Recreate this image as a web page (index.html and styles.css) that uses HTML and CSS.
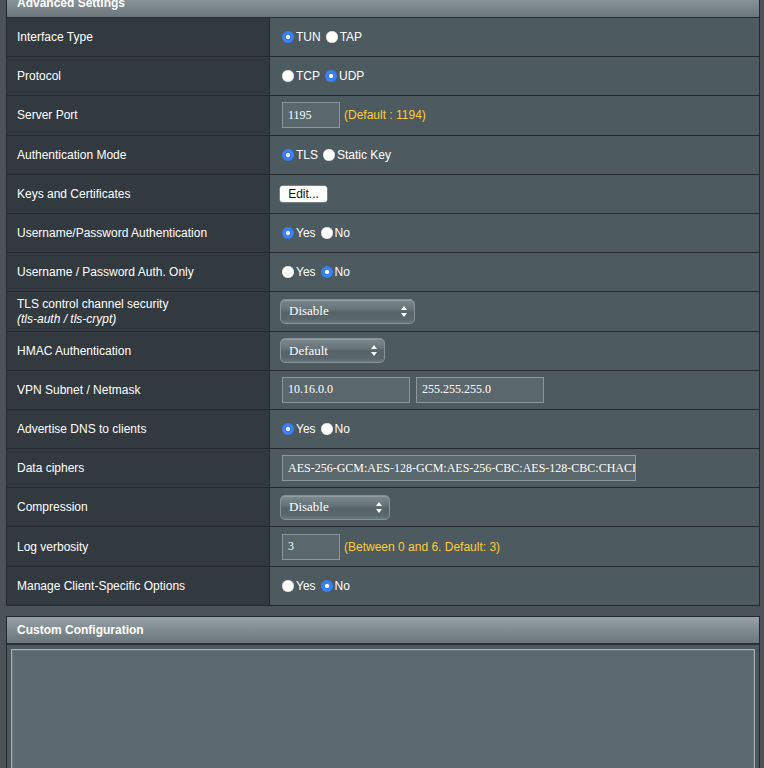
FILE: index.html
```html
<!DOCTYPE html>
<html>
<head>
<meta charset="utf-8">
<link rel="stylesheet" href="styles.css">
</head>
<body>
<div class="block">
  <div class="head first">Advanced Settings</div>
  <div class="row">
    <div class="label">Interface Type</div>
    <div class="value">
      <label class="opt"><input type="radio" name="if" checked>TUN</label>
      <label class="opt"><input type="radio" name="if">TAP</label>
    </div>
  </div>
  <div class="row">
    <div class="label">Protocol</div>
    <div class="value">
      <label class="opt"><input type="radio" name="pr">TCP</label>
      <label class="opt"><input type="radio" name="pr" checked>UDP</label>
    </div>
  </div>
  <div class="row">
    <div class="label">Server Port</div>
    <div class="value">
      <input class="field small" type="text" value="1195">
      <span class="hint">(Default : 1194)</span>
    </div>
  </div>
  <div class="row">
    <div class="label">Authentication Mode</div>
    <div class="value">
      <label class="opt"><input type="radio" name="am" checked>TLS</label>
      <label class="opt"><input type="radio" name="am">Static Key</label>
    </div>
  </div>
  <div class="row">
    <div class="label">Keys and Certificates</div>
    <div class="value">
      <button class="btn" type="button">Edit...</button>
    </div>
  </div>
  <div class="row">
    <div class="label">Username/Password Authentication</div>
    <div class="value">
      <label class="opt"><input type="radio" name="up" checked>Yes</label>
      <label class="opt"><input type="radio" name="up">No</label>
    </div>
  </div>
  <div class="row">
    <div class="label">Username / Password Auth. Only</div>
    <div class="value">
      <label class="opt"><input type="radio" name="uo">Yes</label>
      <label class="opt"><input type="radio" name="uo" checked>No</label>
    </div>
  </div>
  <div class="row">
    <div class="label two">TLS control channel security<br><i>(tls-auth / tls-crypt)</i></div>
    <div class="value">
      <div class="select w134"><span>Disable</span><svg width="6" height="11" viewBox="0 0 6 11"><path d="M3 0 L6 4 L0 4 Z M3 11 L6 7 L0 7 Z" fill="#fff"/></svg></div>
    </div>
  </div>
  <div class="row">
    <div class="label">HMAC Authentication</div>
    <div class="value">
      <div class="select w104"><span>Default</span><svg width="6" height="11" viewBox="0 0 6 11"><path d="M3 0 L6 4 L0 4 Z M3 11 L6 7 L0 7 Z" fill="#fff"/></svg></div>
    </div>
  </div>
  <div class="row">
    <div class="label">VPN Subnet / Netmask</div>
    <div class="value gap6">
      <input class="field mid" type="text" value="10.16.0.0">
      <input class="field mid" type="text" value="255.255.255.0">
    </div>
  </div>
  <div class="row">
    <div class="label">Advertise DNS to clients</div>
    <div class="value">
      <label class="opt"><input type="radio" name="dns" checked>Yes</label>
      <label class="opt"><input type="radio" name="dns">No</label>
    </div>
  </div>
  <div class="row">
    <div class="label">Data ciphers</div>
    <div class="value">
      <input class="field wide" type="text" value="AES-256-GCM:AES-128-GCM:AES-256-CBC:AES-128-CBC:CHACHA20-POLY1305">
    </div>
  </div>
  <div class="row">
    <div class="label">Compression</div>
    <div class="value">
      <div class="select w109"><span>Disable</span><svg width="6" height="11" viewBox="0 0 6 11"><path d="M3 0 L6 4 L0 4 Z M3 11 L6 7 L0 7 Z" fill="#fff"/></svg></div>
    </div>
  </div>
  <div class="row">
    <div class="label">Log verbosity</div>
    <div class="value">
      <input class="field small" type="text" value="3">
      <span class="hint">(Between 0 and 6. Default: 3)</span>
    </div>
  </div>
  <div class="row">
    <div class="label">Manage Client-Specific Options</div>
    <div class="value">
      <label class="opt"><input type="radio" name="mc">Yes</label>
      <label class="opt"><input type="radio" name="mc" checked>No</label>
    </div>
  </div>
</div>

<div class="block second">
  <div class="head">Custom Configuration</div>
  <div class="panel">
    <textarea class="custom"></textarea>
  </div>
</div>
</body>
</html>
```

FILE: styles.css
```css
html {
  overflow: hidden;
}

body {
  margin: 0;
  background: #4b5357;
  font-family: "Liberation Sans", Arial, sans-serif;
  font-size: 12px;
  color: #fff;
}

.block {
  margin: -10px 4px 0 6px;
  border: 1px solid #23292c;
}

.block.second {
  margin-top: 10px;
}

.head {
  height: 26px;
  box-sizing: border-box;
  border-bottom: 1px solid #262c2f;
  background: linear-gradient(to bottom, #96a1a5, #6b767a);
  padding-left: 10px;
  display: flex;
  align-items: center;
  font-weight: bold;
  font-size: 12px;
  color: #fff;
}

.head.first {
  height: 27px;
  padding-bottom: 3px;
}

.second .head {
  height: 28px;
  border-bottom: 2px solid #2b3235;
}

.row {
  display: flex;
  height: 39.2px;
  box-sizing: border-box;
  border-bottom: 1px solid #23292c;
}

.row:last-child {
  border-bottom: none;
  height: 38.2px;
}

.label {
  width: 263px;
  box-sizing: border-box;
  flex: none;
  border-right: 1px solid #23292c;
  background: #323a3f;
  padding-left: 10px;
  display: flex;
  align-items: center;
}

.label.two {
  display: block;
  padding-top: 5px;
  line-height: 15px;
}

.value {
  flex: 1;
  background: #4d5a5f;
  display: flex;
  align-items: center;
  padding-left: 12px;
  gap: 5px;
}

.value.gap6 {
  gap: 6px;
}

.opt {
  display: flex;
  align-items: center;
  gap: 2px;
  color: #fff;
}

.opt input {
  appearance: none;
  -webkit-appearance: none;
  margin: 0;
  width: 12px;
  height: 12px;
  border-radius: 50%;
  background: #fff;
  box-shadow: inset 0 0 0 0.5px #c8c8c8;
}

.opt input:checked {
  background: radial-gradient(circle, #fff 0 1.8px, #3a80f5 2.4px);
  box-shadow: none;
}

.field {
  height: 26px;
  box-sizing: border-box;
  border: 1px solid #8b979a;
  background: #5a676c;
  color: #fff;
  font-family: "Liberation Serif", "Times New Roman", serif;
  font-size: 12px;
  padding: 0 0 0 5px;
  margin: 0;
  outline: none;
}

.field.small {
  width: 58px;
}

.field.mid {
  width: 128px;
}

.field.wide {
  width: 354px;
}

.hint {
  color: #ffcc33;
  margin-left: -1px;
}

.btn {
  margin: 0 0 0 -2px;
  width: 47px;
  height: 16px;
  padding: 0;
  border: none;
  border-radius: 3px;
  background: #fff;
  color: #111;
  font-family: "Liberation Sans", Arial, sans-serif;
  font-size: 12px;
  line-height: 16px;
  box-shadow: 0 0 0 0.5px #9aa;
}

.select {
  margin-left: -2px;
  height: 25px;
  box-sizing: border-box;
  border: 1px solid #879296;
  border-radius: 5px;
  background: linear-gradient(to bottom, #7b888d 0%, #66747a 40%, #56646a 55%, #5a686e 85%, #6b787d 100%);
  box-shadow: inset 0 1px 0 rgba(255,255,255,0.18);
  display: flex;
  align-items: center;
  justify-content: space-between;
  padding: 0 7px 0 8px;
  font-family: "Liberation Serif", "Times New Roman", serif;
  font-size: 13px;
  color: #fff;
}

.select.w134 {
  width: 135px;
}

.select.w104 {
  width: 105px;
}

.select.w109 {
  width: 110px;
}

.panel {
  background: #4e595d;
  padding: 4px 4px 0 4px;
}

.custom {
  display: block;
  width: 100%;
  height: 200px;
  box-sizing: border-box;
  margin: 0;
  background: #5b6a70;
  border: 1px solid #a7afb2;
  box-shadow: inset 0 0 0 1px #6c787c;
  resize: none;
  outline: none;
  color: #fff;
}
```
